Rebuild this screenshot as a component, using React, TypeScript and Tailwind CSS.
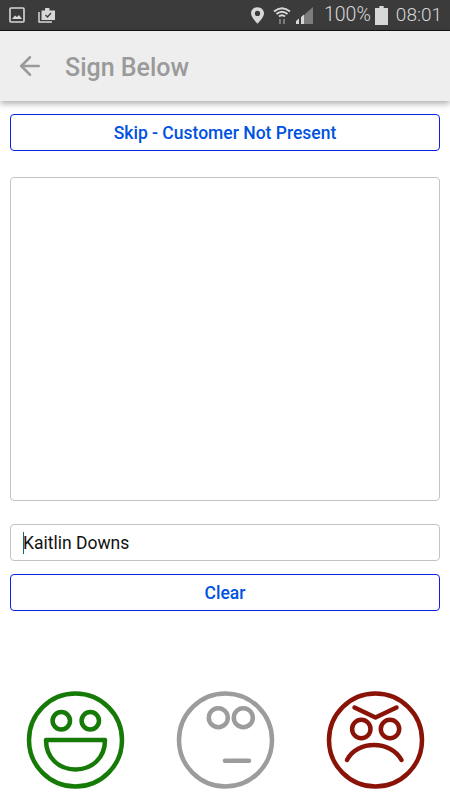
import React from 'react';
import { ArrowLeft } from 'lucide-react';

const StatusBar: React.FC = () => (
  <div className="h-[31px] bg-[#3b3b3b] border-b border-[#111] flex items-center text-[#d8d8d8]">
    <svg className="ml-[9px] w-[16px] h-[16px]" viewBox="0 0 16 16" fill="none">
      <rect x="1" y="1" width="14" height="14" rx="1" stroke="#d8d8d8" strokeWidth="1.6" />
      <path d="M3 12 L6 8.5 L8 10 L10 8 L13 12 Z" fill="#d8d8d8" />
    </svg>
    <svg className="ml-[13px] w-[18px] h-[16px]" viewBox="0 0 18 16" fill="none">
      <path d="M1 5 V15 H14" stroke="#d8d8d8" strokeWidth="1.5" />
      <path d="M3.5 3.5 H7 V1.5 Q7 1 7.5 1 H11 Q11.500 1 11.500 1.500 V3.500 H17 V13 H3.500 Z" fill="#d8d8d8" />
      <path d="M7.500 8 L9.500 10 L13 6" stroke="#3b3b3b" strokeWidth="1.300" />
    </svg>
    <svg className="ml-auto w-[13px] h-[17px]" viewBox="0 0 14 18">
      <path fillRule="evenodd" d="M7 0 C11 0 14 3 14 6.500 C14 10.500 9.500 15 7 18 C4.500 15 0 10.500 0 6.500 C0 3 3 0 7 0 Z M7 4 A2.800 2.800 0 1 0 7 9.600 A2.800 2.800 0 1 0 7 4 Z" fill="#d8d8d8" />
    </svg>
    <svg className="ml-[9px] w-[18px] h-[18px]" viewBox="0 0 18 18" fill="none" stroke="#d8d8d8">
      <path d="M1 5.500 Q9 -1 17 5.500" strokeWidth="2" />
      <path d="M3.500 8 Q9 3.500 14.500 8" strokeWidth="2" />
      <path d="M6 10.500 Q9 8 12 10.500" strokeWidth="2" />
      <path d="M7 13 V18 M11 13 V18" stroke="#8a8a8a" strokeWidth="1.600" />
    </svg>
    <svg className="ml-[5px] w-[18px] h-[18px]" viewBox="0 0 18 18">
      <path d="M17 1 V18 H8 V9 Z" fill="#7d7d7d" />
      <path d="M0 18 V15 L3 12.500 V18 Z M5 18 V11 L8 8.500 V18 Z" fill="#d8d8d8" />
    </svg>
    <span className="ml-[10px] h-[20px] text-[19.500px] leading-[20px] font-light">100%</span>
    <svg className="ml-[4px] w-[13px] h-[19px]" viewBox="0 0 12 19" preserveAspectRatio="none">
      <path d="M4 0 H8 V2 H12 V19 H0 V2 H4 Z" fill="#d8d8d8" />
    </svg>
    <span className="ml-[8px] mr-[8px] h-[20px] text-[19px] leading-[20px] font-light">08:01</span>
  </div>
);

const OutlineButton: React.FC<{ label: string; className?: string }> = ({ label, className }) => (
  <button className={`h-[37px] w-full rounded-[4px] border border-[#0a22e0] bg-white pt-px text-[17.500px] font-medium text-[#0052e0] ${className ?? ''}`}>
    {label}
  </button>
);

const HappyFace: React.FC = () => (
  <svg className="w-[150px] h-[120px]" viewBox="0 0 150 120" fill="none" stroke="#157a06" strokeWidth="4.500">
    <circle cx="75.500" cy="60" r="46.500" />
    <circle cx="61.300" cy="40.700" r="8.700" />
    <circle cx="90.300" cy="40.700" r="8.700" />
    <path d="M46 60 H105 C105 78 92 89.500 75.500 89.500 C59 89.500 46 78 46 60 Z" strokeLinejoin="round" />
  </svg>
);

const NeutralFace: React.FC = () => (
  <svg className="w-[150px] h-[120px]" viewBox="0 0 150 120" fill="none" stroke="#9c9c9c" strokeWidth="4.500">
    <circle cx="75.500" cy="60" r="46.500" />
    <circle cx="68.300" cy="37.700" r="9.500" />
    <circle cx="93.300" cy="37.700" r="9.500" />
    <path d="M75 80.700 H99" strokeLinecap="round" />
  </svg>
);

const AngryFace: React.FC = () => (
  <svg className="w-[150px] h-[120px]" viewBox="0 0 150 120" fill="none" stroke="#8a1308" strokeWidth="4.500">
    <circle cx="75.500" cy="60" r="46.500" />
    <path d="M54.500 27.500 L75.500 37.500 L96.500 27.500" strokeLinecap="round" strokeLinejoin="round" />
    <circle cx="61.300" cy="49" r="9.200" />
    <circle cx="90" cy="49" r="9.200" />
    <path d="M47 80 C52 70 63 65 74 65 C85 65 96 70 101.500 80" strokeLinecap="round" />
  </svg>
);

export default function App() {
  return (
    <div className="w-[450px] h-[800px] overflow-hidden bg-white font-['Roboto',sans-serif]">
      <StatusBar />

      {/* Header */}
      <header className="relative z-10 h-[70px] bg-[#eeeeee] flex items-center shadow-[0_3px_6px_rgba(0,0,0,0.3)]">
        <ArrowLeft className="ml-[15px] w-[30px] h-[30px] text-[#9a9a9a]" strokeWidth={2} />
        <h1 className="ml-[20px] pt-[4px] text-[25px] font-medium text-[#9a9a9a]">Sign Below</h1>
      </header>

      <main className="px-[10px] pt-[13px]">
        <OutlineButton label="Skip - Customer Not Present" />
        <div className="mt-[26px] h-[324px] rounded-[4px] border border-[#c4c4c4]" />
        <div className="relative mt-[23px] h-[37px] rounded-[4px] border border-[#c4c4c4] pl-[12px] pt-px flex items-center text-[17.500px] text-[#111]">
          Kaitlin Downs
          <span className="absolute left-[12px] top-[7px] h-[22px] w-px bg-[#12695f]" />
        </div>
        <OutlineButton label="Clear" className="mt-[13px]" />
      </main>

      {/* Rating faces */}
      <div className="mt-[69px] grid grid-cols-3">
        <HappyFace />
        <NeutralFace />
        <AngryFace />
      </div>
    </div>
  );
}
